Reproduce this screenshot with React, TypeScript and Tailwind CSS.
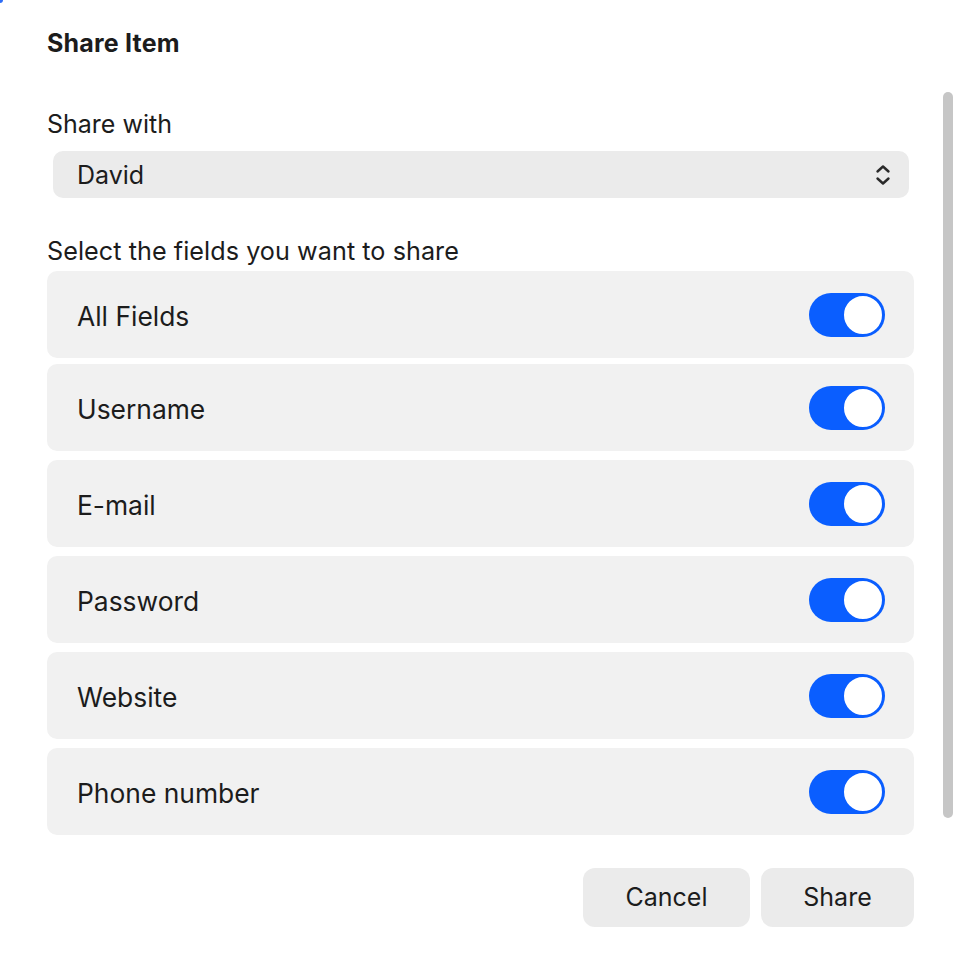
import React from "react";

const fields = ["All Fields", "Username", "E-mail", "Password", "Website", "Phone number"];

function Toggle() {
  return (
    <div className="w-[76px] h-[44px] rounded-full bg-[#0a5eff] relative shrink-0">
      <div className="absolute right-[1px] top-[1px] w-[42px] h-[42px] rounded-full bg-white border-2 border-[#0a5eff]" />
    </div>
  );
}

export default function App() {
  return (
    <div
      className="relative w-[953px] h-[955px] bg-white text-[#1c1c1c] overflow-hidden"
      style={{ fontFamily: "Inter, 'Noto Sans', sans-serif" }}
    >
      <div className="absolute left-0 top-0 w-[3px] h-[3px] bg-[#2f6df6] rounded-br-full" />
      <div className="absolute right-0 top-[92px] w-[10px] h-[726px] bg-[#c6c6c6] rounded-t-full rounded-b-full" />
      <div className="flex flex-col pl-[47px] pr-[39px] pt-[28px]">
        <h1 className="text-[25px] leading-[30px] font-bold tracking-[0.2px]">Share Item</h1>
        <div className="mt-[52px] text-[25px] leading-[28px]">Share with</div>
        <div className="mt-[13px] mx-[6px] mr-[5px] h-[47px] rounded-[10px] bg-[#ebebeb] flex items-center justify-between pl-[24px] pr-[18px]">
          <span className="text-[25px] pt-[2px]">David</span>
          <svg width="16" height="22" viewBox="0 0 16 22" fill="none" stroke="#2a2a2a" strokeWidth="2.4" strokeLinecap="round" strokeLinejoin="round">
            <path d="M2.5 7.5 L8 2.5 L13.5 7.5" />
            <path d="M2.5 14.5 L8 19.5 L13.5 14.5" />
          </svg>
        </div>
        <div className="mt-[39px] text-[25.2px] leading-[28px] tracking-[0.05px]">Select the fields you want to share</div>
        <div className="mt-[6px] flex flex-col">
          {fields.map((f, i) => (
            <div
              key={f}
              className={`h-[87px] rounded-[10px] bg-[#f1f1f1] flex items-center justify-between pl-[30px] pr-[29px] ${i === 0 ? "" : i === 1 ? "mt-[6px]" : "mt-[9px]"}`}
            >
              <span className="text-[26.4px] pt-[4px]">{f}</span>
              <Toggle />
            </div>
          ))}
        </div>
        <div className="mt-[33px] flex justify-end gap-[11px]">
          <button className="w-[167px] h-[59px] rounded-[12px] bg-[#ebebeb] text-[25px]">Cancel</button>
          <button className="w-[153px] h-[59px] rounded-[12px] bg-[#ebebeb] text-[25px]">Share</button>
        </div>
      </div>
    </div>
  );
}
